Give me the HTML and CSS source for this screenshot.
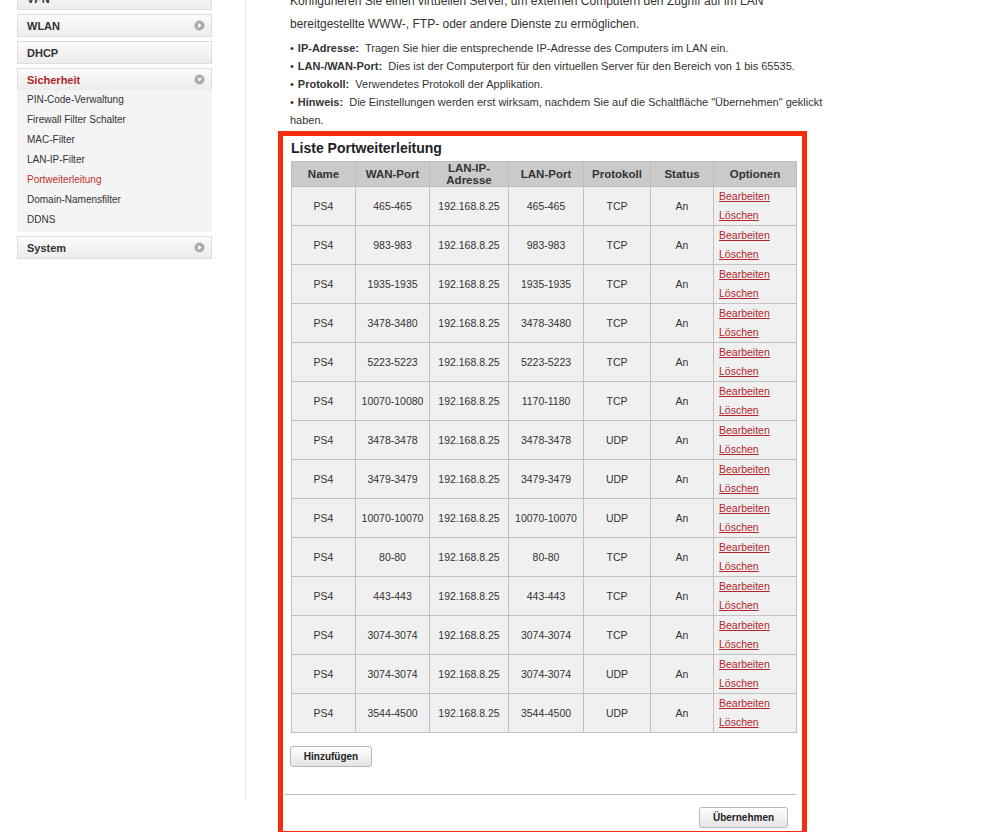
FILE: index.html
```html
<!DOCTYPE html>
<html lang="de">
<head>
<meta charset="utf-8">
<title>Portweiterleitung</title>
<link rel="stylesheet" href="styles.css">
</head>
<body>
<div class="page">
  <nav class="sidebar">
    <div class="menu-head">VPN</div>
    <div class="menu-head">WLAN<svg class="arrow" viewBox="0 0 12 12"><circle cx="6" cy="6" r="5.5"/><path d="M4.6 3.4 L8.3 6 L4.6 8.6 Z"/></svg></div>
    <div class="menu-head">DHCP</div>
    <div class="menu-head active">Sicherheit<svg class="arrow" viewBox="0 0 12 12"><circle cx="6" cy="6" r="5.5"/><path d="M3.4 4.7 L8.6 4.7 L6 8.2 Z"/></svg></div>
    <ul class="submenu">
      <li>PIN-Code-Verwaltung</li>
      <li>Firewall Filter Schalter</li>
      <li>MAC-Filter</li>
      <li>LAN-IP-Filter</li>
      <li class="current">Portweiterleitung</li>
      <li>Domain-Namensfilter</li>
      <li>DDNS</li>
    </ul>
    <div class="menu-head">System<svg class="arrow" viewBox="0 0 12 12"><circle cx="6" cy="6" r="5.5"/><path d="M4.6 3.4 L8.3 6 L4.6 8.6 Z"/></svg></div>
  </nav>
  <div class="divider"></div>
  <main class="main">
    <div class="intro">
      <p class="lead">Konfigurieren Sie einen virtuellen Server, um externen Computern den Zugriff auf im LAN bereitgestellte WWW-, FTP- oder andere Dienste zu ermöglichen.</p>
      <ul class="notes">
        <li><b>IP-Adresse:</b>&nbsp; Tragen Sie hier die entsprechende IP-Adresse des Computers im LAN ein.</li>
        <li><b>LAN-/WAN-Port:</b>&nbsp; Dies ist der Computerport für den virtuellen Server für den Bereich von 1 bis 65535.</li>
        <li><b>Protokoll:</b>&nbsp; Verwendetes Protokoll der Applikation.</li>
        <li><b>Hinweis:</b>&nbsp; Die Einstellungen werden erst wirksam, nachdem Sie auf die Schaltfläche "Übernehmen" geklickt haben.</li>
      </ul>
    </div>
    <section class="box">
      <h3 class="box-title">Liste Portweiterleitung</h3>
      <table class="list">
        <colgroup>
          <col class="c1"><col class="c2"><col class="c3"><col class="c4"><col class="c5"><col class="c6"><col class="c7">
        </colgroup>
        <thead>
          <tr><th>Name</th><th>WAN-Port</th><th>LAN-IP-Adresse</th><th>LAN-Port</th><th>Protokoll</th><th>Status</th><th>Optionen</th></tr>
        </thead>
        <tbody>
          <tr><td>PS4</td><td>465-465</td><td>192.168.8.25</td><td>465-465</td><td>TCP</td><td>An</td><td class="opt"><a>Bearbeiten</a><a>Löschen</a></td></tr>
          <tr><td>PS4</td><td>983-983</td><td>192.168.8.25</td><td>983-983</td><td>TCP</td><td>An</td><td class="opt"><a>Bearbeiten</a><a>Löschen</a></td></tr>
          <tr><td>PS4</td><td>1935-1935</td><td>192.168.8.25</td><td>1935-1935</td><td>TCP</td><td>An</td><td class="opt"><a>Bearbeiten</a><a>Löschen</a></td></tr>
          <tr><td>PS4</td><td>3478-3480</td><td>192.168.8.25</td><td>3478-3480</td><td>TCP</td><td>An</td><td class="opt"><a>Bearbeiten</a><a>Löschen</a></td></tr>
          <tr><td>PS4</td><td>5223-5223</td><td>192.168.8.25</td><td>5223-5223</td><td>TCP</td><td>An</td><td class="opt"><a>Bearbeiten</a><a>Löschen</a></td></tr>
          <tr><td>PS4</td><td>10070-10080</td><td>192.168.8.25</td><td>1170-1180</td><td>TCP</td><td>An</td><td class="opt"><a>Bearbeiten</a><a>Löschen</a></td></tr>
          <tr><td>PS4</td><td>3478-3478</td><td>192.168.8.25</td><td>3478-3478</td><td>UDP</td><td>An</td><td class="opt"><a>Bearbeiten</a><a>Löschen</a></td></tr>
          <tr><td>PS4</td><td>3479-3479</td><td>192.168.8.25</td><td>3479-3479</td><td>UDP</td><td>An</td><td class="opt"><a>Bearbeiten</a><a>Löschen</a></td></tr>
          <tr><td>PS4</td><td>10070-10070</td><td>192.168.8.25</td><td>10070-10070</td><td>UDP</td><td>An</td><td class="opt"><a>Bearbeiten</a><a>Löschen</a></td></tr>
          <tr><td>PS4</td><td>80-80</td><td>192.168.8.25</td><td>80-80</td><td>TCP</td><td>An</td><td class="opt"><a>Bearbeiten</a><a>Löschen</a></td></tr>
          <tr><td>PS4</td><td>443-443</td><td>192.168.8.25</td><td>443-443</td><td>TCP</td><td>An</td><td class="opt"><a>Bearbeiten</a><a>Löschen</a></td></tr>
          <tr><td>PS4</td><td>3074-3074</td><td>192.168.8.25</td><td>3074-3074</td><td>TCP</td><td>An</td><td class="opt"><a>Bearbeiten</a><a>Löschen</a></td></tr>
          <tr><td>PS4</td><td>3074-3074</td><td>192.168.8.25</td><td>3074-3074</td><td>UDP</td><td>An</td><td class="opt"><a>Bearbeiten</a><a>Löschen</a></td></tr>
          <tr><td>PS4</td><td>3544-4500</td><td>192.168.8.25</td><td>3544-4500</td><td>UDP</td><td>An</td><td class="opt"><a>Bearbeiten</a><a>Löschen</a></td></tr>
        </tbody>
      </table>
      <div class="add-row"><button class="btn add">Hinzufügen</button></div>
      <div class="apply-row"><button class="btn apply">Übernehmen</button></div>
    </section>
  </main>
</div>
</body>
</html>
```

FILE: styles.css
```css
html, body {
  margin: 0;
  padding: 0;
  background: #ffffff;
  overflow: hidden;
}
body {
  font-family: "Liberation Sans", Arial, Helvetica, sans-serif;
  color: #333333;
  width: 1004px;
  height: 832px;
}
.page {
  display: flex;
  align-items: flex-start;
}

/* Sidebar */
.sidebar {
  width: 195px;
  margin-left: 17px;
  margin-top: -13px;
  display: flex;
  flex-direction: column;
  gap: 4px;
}
.menu-head {
  height: 21px;
  border: 1px solid #dedede;
  background: linear-gradient(#fbfbfb, #ececec);
  display: flex;
  align-items: center;
  justify-content: space-between;
  padding: 0 6px 0 9px;
  font-size: 11px;
  font-weight: bold;
  color: #333333;
}
.menu-head.active {
  color: #b3262c;
}
.arrow {
  width: 11px;
  height: 11px;
}
.arrow circle {
  fill: #ababab;
}
.arrow path {
  fill: #ffffff;
}
.submenu {
  list-style: none;
  margin: -5px 0 0 0;
  padding: 0 0 2px 0;
  background: #f4f4f4;
}
.submenu li {
  height: 20px;
  line-height: 20px;
  padding-left: 10px;
  font-size: 10px;
  color: #333333;
}
.submenu li.current {
  color: #c0322f;
}

/* Divider */
.divider {
  width: 1px;
  height: 818px;
  background: #e6e6e6;
  margin-left: 33px;
  margin-top: -18px;
}

/* Main */
.main {
  padding-left: 32px;
  width: 600px;
}
.intro {
  padding-left: 12px;
  width: 535px;
}
.lead {
  margin: -10px 0 0 0;
  font-size: 12px;
  line-height: 23px;
  color: #333333;
}
.notes {
  list-style: none;
  margin: 3px 0 2px 0;
  padding: 0;
}
.notes li {
  font-size: 11px;
  line-height: 18px;
  color: #333333;
}
.notes li::before {
  content: "\2022";
  margin-right: 4px;
}

/* Red box */
.box {
  border: 5px solid #f72b0d;
  padding: 0 6px 3px 8px;
  width: 505px;
}
.box-title {
  margin: 0;
  height: 25px;
  line-height: 25px;
  font-size: 14px;
  font-weight: bold;
  color: #222222;
}
.list {
  width: 505px;
  border-collapse: collapse;
  table-layout: fixed;
  font-size: 10.5px;
}
.c1 { width: 64px; }
.c2 { width: 74px; }
.c3 { width: 79px; }
.c4 { width: 75px; }
.c5 { width: 67px; }
.c6 { width: 63px; }
.c7 { width: 83px; }
.list th {
  background: #cacaca;
  border: 1px solid #bdbdbd;
  height: 24px;
  padding: 0 2px;
  font-size: 11.5px;
  line-height: 12px;
  font-weight: bold;
  color: #333333;
  text-align: center;
}
.list td {
  background: #f0f0f0;
  border: 1px solid #c2c2c2;
  height: 37px;
  padding: 0;
  text-align: center;
  color: #333333;
}
.list td.opt {
  text-align: left;
  padding-left: 5px;
  line-height: 19px;
}
.opt a {
  display: block;
  color: #b3262c;
  text-decoration: underline;
  cursor: pointer;
}

/* Buttons */
.btn {
  font-family: "Liberation Sans", Arial, Helvetica, sans-serif;
  font-size: 10px;
  font-weight: bold;
  color: #222222;
  background: linear-gradient(#ffffff, #e4e4e4);
  border: 1px solid #b4b9c0;
  border-radius: 3px;
  height: 21px;
  padding: 0;
}
.add-row {
  margin-top: 13px;
  padding-bottom: 27px;
  border-bottom: 1px solid #bdbdbd;
  margin-left: -6px;
  padding-left: 5px;
}
.add {
  width: 82px;
}
.apply-row {
  display: flex;
  justify-content: flex-end;
  padding: 12px 8px 0 0;
}
.apply {
  width: 89px;
  height: 21px;
}
```
